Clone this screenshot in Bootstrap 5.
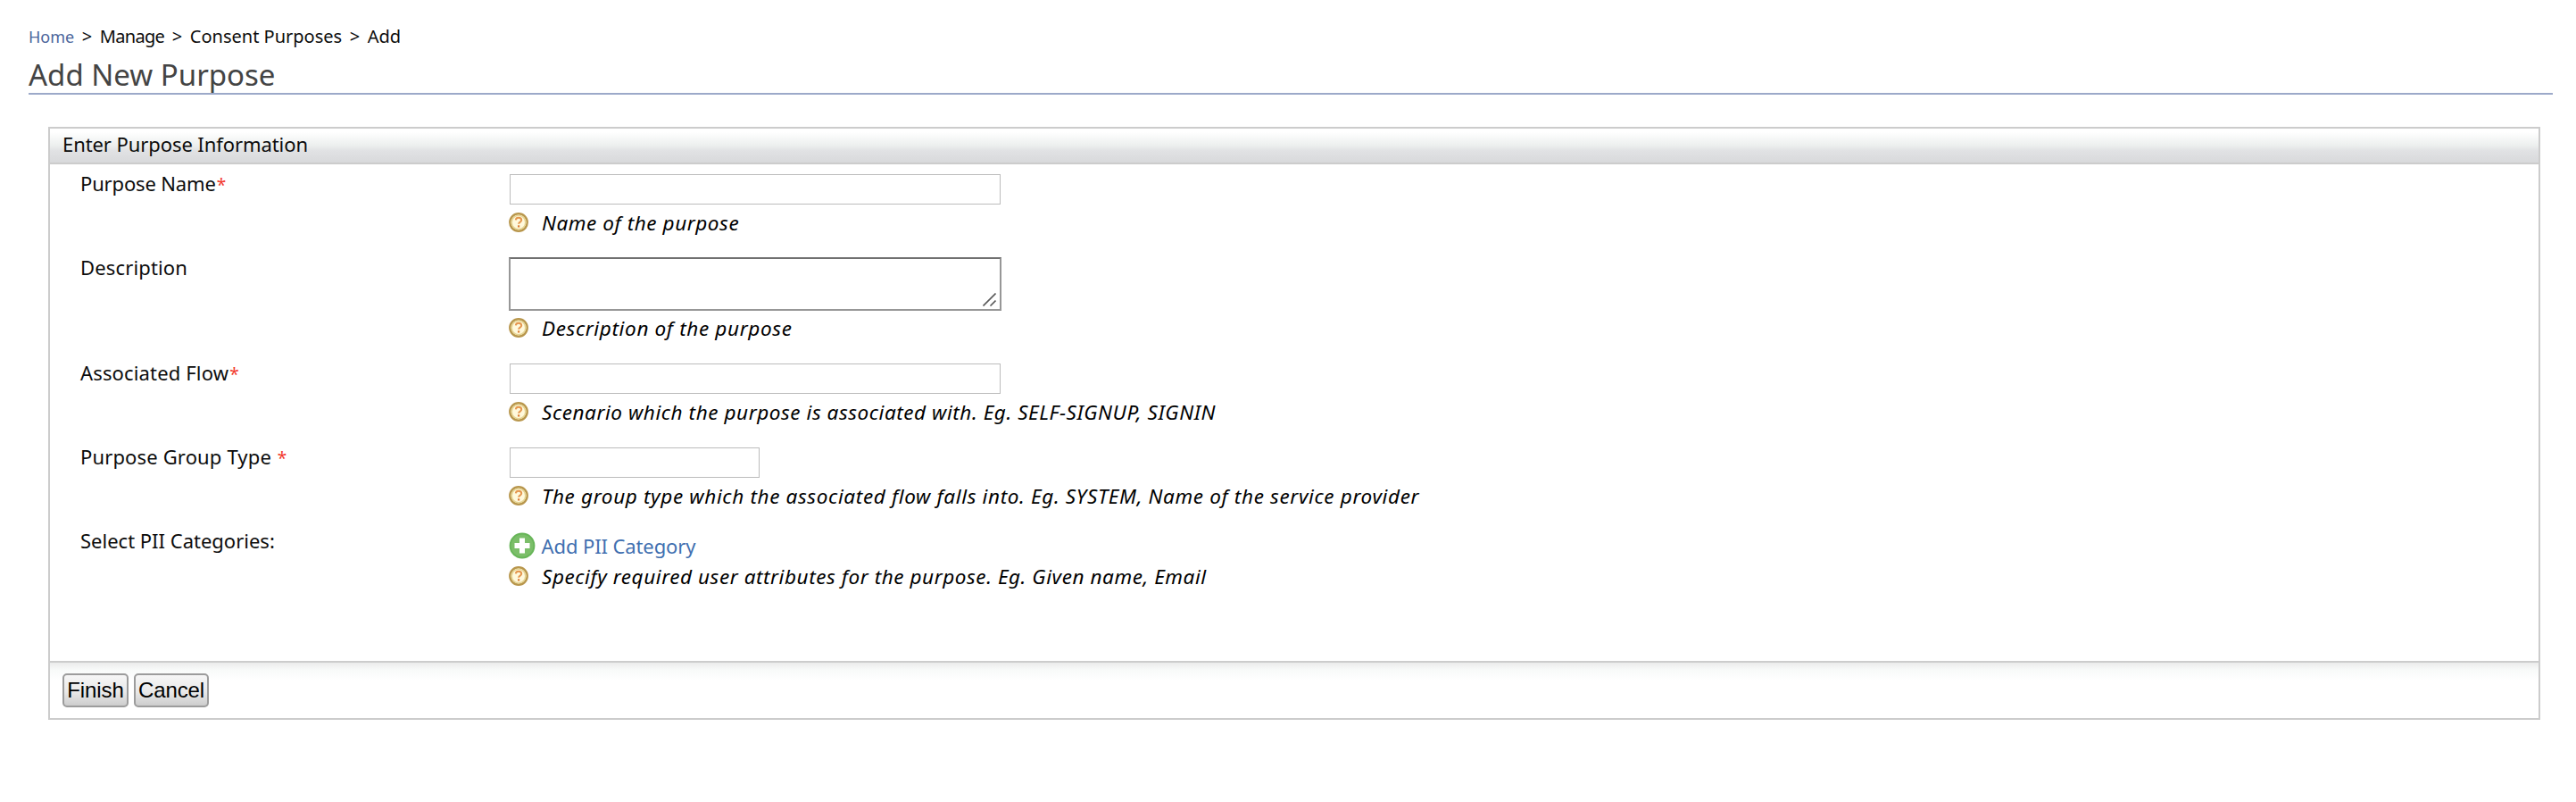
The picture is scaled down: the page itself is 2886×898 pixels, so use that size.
<!DOCTYPE html>
<html lang="en">
<head>
<meta charset="utf-8">
<title>Add New Purpose</title>
<link rel="stylesheet" href="https://cdn.jsdelivr.net/npm/bootstrap@5.3.0/dist/css/bootstrap.min.css">
<style>
body{font-family:"Noto Sans",sans-serif;font-size:22px;color:#0c0c0c;background:#fff}
.page{padding:26px 26px 0 32px}
.crumbs{font-size:20px;line-height:30px;gap:8.6px}
.crumbs a{font-size:18px;color:#4a659b}
.crumbs .tight{letter-spacing:-.7px}
.title{font-size:33px;line-height:42px;height:43px;font-weight:400;color:#444;margin:7px 0 36px;border-bottom:2px solid #9ca9c9}
.panel{margin:0 14px 0 22px;border:2px solid #ccc;border-radius:0;color:inherit}
.panel-head{padding:0 14px 3px;line-height:35px;letter-spacing:-.08px;border-bottom:2px solid #ccc;border-radius:0!important;background:linear-gradient(#fff 10%,#ecefee 50%,#e1e2e4 65%,#d8d9db)}
.field{height:94px}
.field-label{width:514px;padding:4px 0 0 34px;line-height:34px}
.field-label.tight{letter-spacing:-.15px}
.field-label.wide{letter-spacing:.15px}
.field-label b{font-weight:400;font-size:19px;color:#f2382c;margin-left:1px}
.field-body{padding-top:11px}
.field-tall{height:118px}
.field-tall .field-body{padding-top:10px}
.field-last{height:156px}
.field-last .field-body{padding-top:12px}
.entry{width:550px;height:34px;margin:0 1px 6px;padding:2px 4px;border:1px solid #bcbcbc;border-radius:0;font-size:22px}
.entry.short{width:280px}
.area{width:552px;margin-bottom:5px}
.area textarea{width:552px;height:60px;min-height:0;border:2px solid #979797;border-top-color:#707070;border-radius:0;resize:none;padding:2px 4px;overflow:hidden}
.grip{right:6px;bottom:5px}
.hint{font-style:italic;font-size:22.5px;line-height:30px;letter-spacing:.57px;gap:15px;color:#000}
.hint.loose{letter-spacing:.65px}
.hint svg{margin-top:3px}
.add{line-height:30px;gap:7px;color:#3f6fb0;letter-spacing:-.1px;margin-bottom:5px;width:max-content}
.add svg{margin-left:-.5px}
.panel-foot{height:64px;padding:12px 14px 0;gap:6px;border-top:2px solid #ccc;border-radius:0!important;background:linear-gradient(#ebebeb,#f8faf9 8px,#fff 20px)}
.tool{height:38px;padding:0;white-space:nowrap;font:24px/34px "Liberation Sans",sans-serif;letter-spacing:-.1px;color:#000;border:2px solid #9c9c9c;border-radius:5px;background:linear-gradient(#f6f6f6,#e9e9e9 55%,#cdcdcd)}
.tool-a{width:74px}.tool-b{width:84px}
</style>
<script src="https://cdn.jsdelivr.net/npm/bootstrap@5.3.0/dist/js/bootstrap.bundle.min.js"></script>
</head>
<body>
<svg class="d-none" aria-hidden="true">
  <symbol id="help" viewBox="0 0 22 22">
    <circle cx="11" cy="11" r="9.7" fill="#fff9dc" stroke="#b8964c" stroke-width="2.4"/>
    <circle cx="11" cy="11" r="7.8" fill="none" stroke="#e6d595" stroke-width="1.6"/>
    <path d="M7.800 8.300C8 6.500 9.200 5.800 11 5.800s3.200.9 3.200 2.600c0 2.200-3.100 2.200-3.100 4.400" fill="none" stroke="#e5964e" stroke-width="2"/>
    <path d="M10 14.300h2.200v2.200H10z" fill="#dc7c35"/>
  </symbol>
</svg>
<main class="page">
  <nav class="crumbs d-flex">
    <a class="text-decoration-none" href="#">Home</a><span>&gt;</span><span class="tight">Manage</span><span>&gt;</span><span>Consent Purposes</span><span>&gt;</span><span>Add</span>
  </nav>
  <h1 class="title">Add New Purpose</h1>
  <form class="card panel">
    <div class="card-header panel-head">Enter Purpose Information</div>
    <div class="card-body p-0">
      <div class="field d-flex">
        <label class="field-label tight" for="name">Purpose Name<b>*</b></label>
        <div class="field-body">
          <input id="name" class="form-control entry" type="text">
          <div class="hint d-flex"><svg width="22" height="22"><use href="#help"/></svg><span>Name of the purpose</span></div>
        </div>
      </div>
      <div class="field field-tall d-flex">
        <label class="field-label wide" for="desc">Description</label>
        <div class="field-body">
          <div class="area position-relative">
            <textarea id="desc" class="form-control"></textarea>
            <svg class="grip position-absolute" width="15" height="15" viewBox="0 0 15 15" stroke="#5a5a5a" stroke-width="1.6"><path d="M.5 14.5l14-14M8.5 14.5l6-6"/></svg>
          </div>
          <div class="hint loose d-flex"><svg width="22" height="22"><use href="#help"/></svg><span>Description of the purpose</span></div>
        </div>
      </div>
      <div class="field d-flex">
        <label class="field-label wide" for="flow">Associated Flow<b>*</b></label>
        <div class="field-body">
          <input id="flow" class="form-control entry" type="text">
          <div class="hint d-flex"><svg width="22" height="22"><use href="#help"/></svg><span>Scenario which the purpose is associated with. Eg. SELF-SIGNUP, SIGNIN</span></div>
        </div>
      </div>
      <div class="field d-flex">
        <label class="field-label wide" for="group">Purpose Group Type <b>*</b></label>
        <div class="field-body">
          <input id="group" class="form-control entry short" type="text">
          <div class="hint loose d-flex"><svg width="22" height="22"><use href="#help"/></svg><span>The group type which the associated flow falls into. Eg. SYSTEM, Name of the service provider</span></div>
        </div>
      </div>
      <div class="field field-last d-flex">
        <span class="field-label">Select PII Categories:</span>
        <div class="field-body">
          <a class="add d-flex align-items-center text-decoration-none" href="#"><svg width="30" height="30" viewBox="0 0 30 30"><circle cx="15" cy="15" r="14.4" fill="#67b558"/><circle cx="15" cy="15" r="12.5" fill="#7bbe69"/><path d="M12 6.500h6V12h5.500v6H18v5.500h-6V18H6.500v-6H12z" fill="#fff"/></svg><span>Add PII Category</span></a>
          <div class="hint d-flex"><svg width="22" height="22"><use href="#help"/></svg><span>Specify required user attributes for the purpose. Eg. Given name, Email</span></div>
        </div>
      </div>
    </div>
    <div class="card-footer panel-foot d-flex">
      <button type="button" class="btn tool tool-a">Finish</button>
      <button type="button" class="btn tool tool-b">Cancel</button>
    </div>
  </form>
</main>
</body>
</html>
